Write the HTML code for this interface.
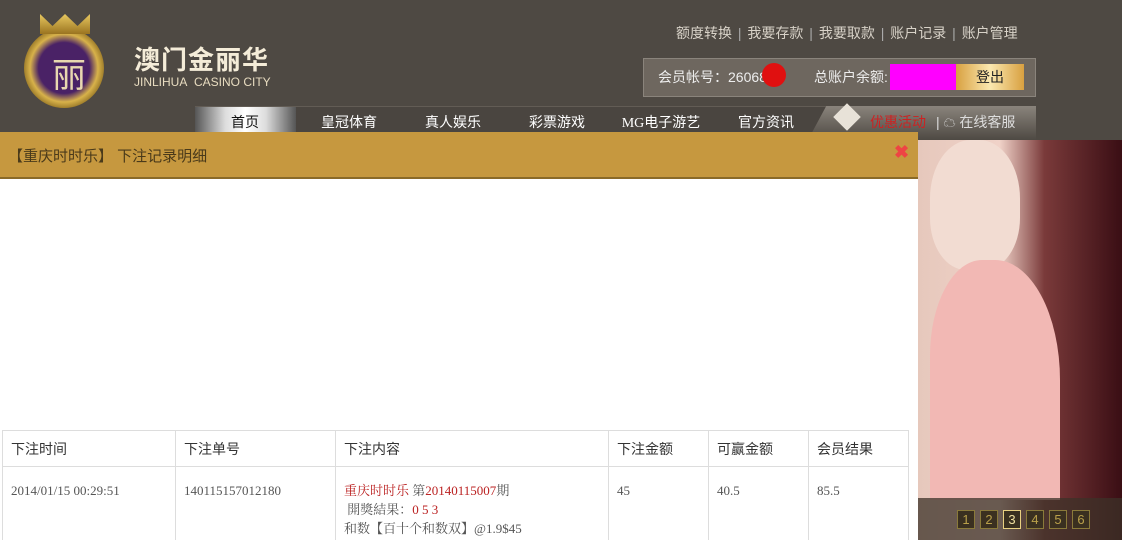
<!DOCTYPE html>
<html><head><meta charset="utf-8"><style>
*{margin:0;padding:0;box-sizing:border-box}
html,body{width:1122px;height:540px;overflow:hidden}
body{background:#4e4943;font-family:"Liberation Sans","Noto Sans CJK SC",sans-serif}
#w{position:relative;width:1122px;height:540px;overflow:hidden}
.abs{position:absolute}
.top{word-spacing:2px}
.top a{color:#d8d2c8;font-size:14px}
.nav span{position:absolute;top:112px;color:#fff;font-size:14px;width:104px;text-align:center}
td,th{border:1px solid #ddd;font-family:"Liberation Serif","Noto Serif CJK SC",serif;font-size:13px;color:#555;vertical-align:top;text-align:left;padding:0 8px}
th{font-family:"Liberation Sans","Noto Sans CJK SC",sans-serif;font-weight:normal;font-size:14px;color:#333;height:36px;vertical-align:middle}
.r{color:#b22}
.pg{position:absolute;top:510px;width:18px;height:19px;border:1px solid #8a7a3a;background:#3a3020;color:#b9a04a;font-size:13px;text-align:center;line-height:17px}
</style></head><body><div id="w">
<div class="abs" style="left:24px;top:28px;width:80px;height:80px;border-radius:50%;background:radial-gradient(circle,#4a2266 45%,#d8b24a 60%,#8a6a20 75%,transparent 77%)"></div>
<div class="abs" style="left:52px;top:48px;color:#e8d8b0;font-size:34px;font-family:'Noto Sans CJK SC',sans-serif">丽</div>
<div class="abs" style="left:40px;top:14px;width:50px;height:20px;background:linear-gradient(#e8c860,#9a7420);clip-path:polygon(0 100%,0 0,25% 60%,50% 0,75% 60%,100% 0,100% 100%)"></div>
<div class="abs" style="left:134px;top:40px;color:#f4ecd8;font-size:26px;font-weight:bold;letter-spacing:1px;font-family:'Noto Sans CJK SC',sans-serif">澳门金丽华</div>
<div class="abs" style="left:134px;top:75px;color:#e8dcc0;font-size:12px">JINLIHUA&nbsp; CASINO CITY</div>
<div class="abs top" style="left:676px;top:23px;color:#aaa;font-size:14px;white-space:nowrap"><a>额度转换</a>&nbsp;|&nbsp;<a>我要存款</a>&nbsp;|&nbsp;<a>我要取款</a>&nbsp;|&nbsp;<a>账户记录</a>&nbsp;|&nbsp;<a>账户管理</a></div>
<div class="abs" style="left:643px;top:58px;width:393px;height:39px;background:#6e675f;border:1px solid #8a847c"></div>
<div class="abs" style="left:658px;top:67px;color:#eee;font-size:14px">会员帐号：26068</div>
<div class="abs" style="left:762px;top:63px;width:24px;height:24px;border-radius:50%;background:#e01010"></div>
<div class="abs" style="left:814px;top:67px;color:#eee;font-size:14px">总账户余额:</div>
<div class="abs" style="left:890px;top:64px;width:66px;height:26px;background:#f0f"></div>
<div class="abs" style="left:956px;top:64px;width:68px;height:26px;background:linear-gradient(90deg,#d8a040,#fbe8b0,#d8a040);text-align:center;line-height:26px;font-size:14px;color:#222">登出</div>
<div class="abs" style="left:195px;top:106px;width:841px;height:26px;background:#4a4540;border-top:1px solid #625c55"></div>
<div class="abs" style="left:195px;top:107px;width:101px;height:25px;background:linear-gradient(90deg,#555,#ddd 30%,#fff 50%,#ddd 70%,#555)"></div>
<div class="nav"><span style="left:193px;color:#111">首页</span><span style="left:297px">皇冠体育</span><span style="left:401px">真人娱乐</span><span style="left:505px">彩票游戏</span><span style="left:609px;font-family:'Liberation Serif','Noto Sans CJK SC',serif">MG电子游艺</span><span style="left:714px">官方资讯</span></div>
<div class="abs" style="left:808px;top:106px;width:228px;height:34px;background:linear-gradient(#8a847c,#4e4943);clip-path:polygon(8% 0,100% 0,100% 100%,0 100%)"></div>
<div class="abs" style="left:834px;top:104px;width:26px;height:26px;background:#e8e2d8;transform:rotate(45deg) scale(.75)"></div>
<div class="abs" style="left:870px;top:112px;color:#c22;font-size:14px">优惠活动</div>
<div class="abs" style="left:936px;top:112px;color:#ddd;font-size:14px">| <span style="font-size:12px">☁</span> 在线客服</div>
<div class="abs" style="left:918px;top:140px;width:204px;height:400px;background:linear-gradient(90deg,#e6c8bc 0,#f0d2c8 40%,#7a3a3a 62%,#3a0e14 100%)"></div>
<div class="abs" style="left:930px;top:140px;width:90px;height:130px;border-radius:45% 45% 40% 40%;background:#f2dcd2"></div>
<div class="abs" style="left:930px;top:260px;width:130px;height:240px;border-radius:40% 50% 0 0;background:#f2b8b4"></div>
<div class="abs" style="left:918px;top:498px;width:204px;height:42px;background:rgba(60,50,40,.75)"></div>
<div class="pg" style="left:957px">1</div><div class="pg" style="left:980px">2</div><div class="pg" style="left:1003px;border-color:#e8d080;color:#f0e0a0">3</div><div class="pg" style="left:1026px">4</div><div class="pg" style="left:1049px">5</div><div class="pg" style="left:1072px">6</div>
<div class="abs" style="left:0;top:132px;width:918px;height:47px;background:#c6983f;border-bottom:2px solid #8a6a28"></div>
<div class="abs" style="left:8px;top:145px;color:#4a3a1a;font-size:15px">【重庆时时乐】 下注记录明细</div>
<div class="abs" style="left:894px;top:142px;color:#e44;font-size:18px;font-weight:bold">✖</div>
<div class="abs" style="left:0;top:179px;width:918px;height:361px;background:#fff"></div>
<table class="abs" style="left:2px;top:430px;width:907px;border-collapse:collapse">
<tr><th style="width:173px">下注时间</th><th style="width:160px">下注单号</th><th style="width:273px">下注内容</th><th style="width:100px">下注金额</th><th style="width:100px">可赢金额</th><th>会员结果</th></tr>
<tr style="height:90px"><td style="padding-top:16px">2014/01/15 00:29:51</td><td style="padding-top:16px">140115157012180</td><td style="padding-top:14px;line-height:19px"><span class="r">重庆时时乐</span> 第<span class="r">20140115007</span>期<br>&nbsp;開獎結果：<span class="r">0 5 3</span><br>和数【百十个和数双】@1.9$45</td><td style="padding-top:16px">45</td><td style="padding-top:16px">40.5</td><td style="padding-top:16px">85.5</td></tr>
</table>
</div></body></html>
